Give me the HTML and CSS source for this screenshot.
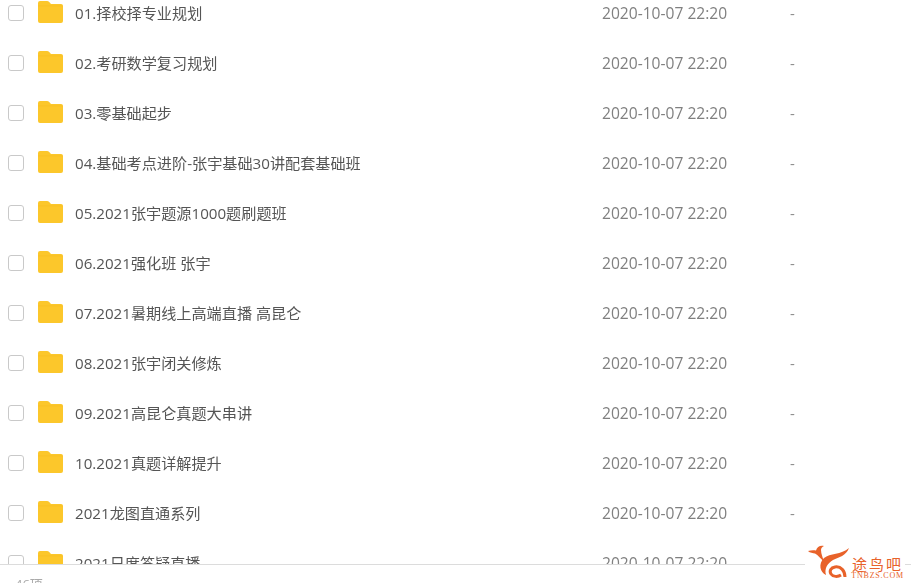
FILE: index.html
```html
<!DOCTYPE html>
<html lang="zh-CN">
<head>
  <meta charset="UTF-8" />
  <title>文件列表</title>
  <link rel="stylesheet" href="styles.css">
</head>
<body>
  <svg class="defs" width="0" height="0">
    <symbol id="folder" viewBox="0 0 25 22">
      <path fill="#fcc72b" d="M2 0h7c1 0 1.600.4 2.200 1L13 3h10a2 2 0 0 1 2 2v15a2 2 0 0 1-2 2H2a2 2 0 0 1-2-2V2a2 2 0 0 1 2-2z"/>
      <path fill="#f5b81c" d="M0 4.500h25V5.300H0z" opacity=".45"/>
    </symbol>
  </svg>

  <div class="file-list">
    <div class="row"><span class="check"></span><svg class="folder"><use href="#folder"/></svg><span class="name">01.择校择专业规划</span><span class="time">2020-10-07 22:20</span><span class="size">-</span></div>
    <div class="row"><span class="check"></span><svg class="folder"><use href="#folder"/></svg><span class="name">02.考研数学复习规划</span><span class="time">2020-10-07 22:20</span><span class="size">-</span></div>
    <div class="row"><span class="check"></span><svg class="folder"><use href="#folder"/></svg><span class="name">03.零基础起步</span><span class="time">2020-10-07 22:20</span><span class="size">-</span></div>
    <div class="row"><span class="check"></span><svg class="folder"><use href="#folder"/></svg><span class="name">04.基础考点进阶-张宇基础30讲配套基础班</span><span class="time">2020-10-07 22:20</span><span class="size">-</span></div>
    <div class="row"><span class="check"></span><svg class="folder"><use href="#folder"/></svg><span class="name">05.2021张宇题源1000题刷题班</span><span class="time">2020-10-07 22:20</span><span class="size">-</span></div>
    <div class="row"><span class="check"></span><svg class="folder"><use href="#folder"/></svg><span class="name">06.2021强化班 张宇</span><span class="time">2020-10-07 22:20</span><span class="size">-</span></div>
    <div class="row"><span class="check"></span><svg class="folder"><use href="#folder"/></svg><span class="name">07.2021暑期线上高端直播 高昆仑</span><span class="time">2020-10-07 22:20</span><span class="size">-</span></div>
    <div class="row"><span class="check"></span><svg class="folder"><use href="#folder"/></svg><span class="name">08.2021张宇闭关修炼</span><span class="time">2020-10-07 22:20</span><span class="size">-</span></div>
    <div class="row"><span class="check"></span><svg class="folder"><use href="#folder"/></svg><span class="name">09.2021高昆仑真题大串讲</span><span class="time">2020-10-07 22:20</span><span class="size">-</span></div>
    <div class="row"><span class="check"></span><svg class="folder"><use href="#folder"/></svg><span class="name">10.2021真题详解提升</span><span class="time">2020-10-07 22:20</span><span class="size">-</span></div>
    <div class="row"><span class="check"></span><svg class="folder"><use href="#folder"/></svg><span class="name">2021龙图直通系列</span><span class="time">2020-10-07 22:20</span><span class="size">-</span></div>
    <div class="row"><span class="check"></span><svg class="folder"><use href="#folder"/></svg><span class="name">2021日度答疑直播</span><span class="time">2020-10-07 22:20</span><span class="size">-</span></div>
  </div>

  <div class="footer">46项</div>

  <div class="watermark">
    <svg class="bird" viewBox="0 0 42 36">
      <path fill="#e8622a" d="M0 6c3-1 6-1 8-.5C9 2 12 0 16 1c-2 1-3 2-3 4 0 4 2 8 3 12-3-3-6-7-9-8.500C5 8 2 8 0 6z"/>
      <path fill="#e8622a" d="M41 3C38 11 31 12 25 15c-5 3-9 8-7 15-6-3-8-11-2-17C22 8 33 10 41 3z"/>
      <path fill="none" stroke="#e8622a" stroke-width="3" d="M37 32c0-6-4-11-10-10-4 .6-6 4-4 7 2 3 7 3 10 1"/>
    </svg>
    <div class="brand">
      <span class="brand-cn">途鸟吧</span>
      <span class="brand-en">TNBZS.COM</span>
    </div>
  </div>
</body>
</html>
```

FILE: styles.css
```css
* {
  box-sizing: border-box;
  margin: 0;
  padding: 0;
}

html, body {
  height: 100%;
}

body {
  display: flex;
  flex-direction: column;
  overflow: hidden;
  position: relative;
  background-color: #fff;
  font-family: "Open Sans", "Noto Sans CJK SC", sans-serif;
  font-size: 15px;
  color: #666;
}

.defs {
  position: absolute;
}

.file-list {
  flex: 1;
  min-height: 0;
  overflow: hidden;
  filter: blur(.3px);
}

.row {
  display: flex;
  align-items: center;
  height: 50px;
  padding-left: 8px;
  position: relative;
  top: -12px;
}

.check {
  flex: none;
  width: 16px;
  height: 16px;
  border: 1px solid #c9c9c9;
  border-radius: 3px;
  margin-right: 14px;
}

.folder {
  flex: none;
  width: 25px;
  height: 22px;
  margin-right: 12px;
  position: relative;
  top: -1px;
}

.name {
  width: 527px;
  flex: none;
  font-size: 15.15px;
  color: #555;
  white-space: nowrap;
  position: relative;
  top: -1px;
}

.time {
  width: 188px;
  flex: none;
  font-size: 15.6px;
  color: #808080;
}

.size {
  color: #8a8a8a;
}

.footer {
  flex: none;
  height: 19px;
  padding: 11px 0 0 15px;
  border-top: 1px solid #dcdcdc;
  font-size: 13px;
  line-height: 16px;
  color: #aaa;
  filter: blur(.3px);
}

.watermark {
  position: absolute;
  right: 6px;
  bottom: 0;
  display: flex;
  align-items: center;
  gap: 1px;
  height: 40px;
  padding: 0 1px 0 3px;
  background-color: #fff;
}

.bird {
  width: 42px;
  height: 36px;
}

.brand {
  display: flex;
  flex-direction: column;
  align-items: center;
  color: #e8622a;
  padding-top: 10px;
}

.brand-cn {
  font-size: 15px;
  line-height: 14px;
  letter-spacing: 2px;
  font-family: "Noto Sans CJK SC", sans-serif;
}

.brand-en {
  font-family: "Liberation Serif", serif;
  font-size: 8px;
  line-height: 9px;
  letter-spacing: .8px;
  white-space: nowrap;
}
```
